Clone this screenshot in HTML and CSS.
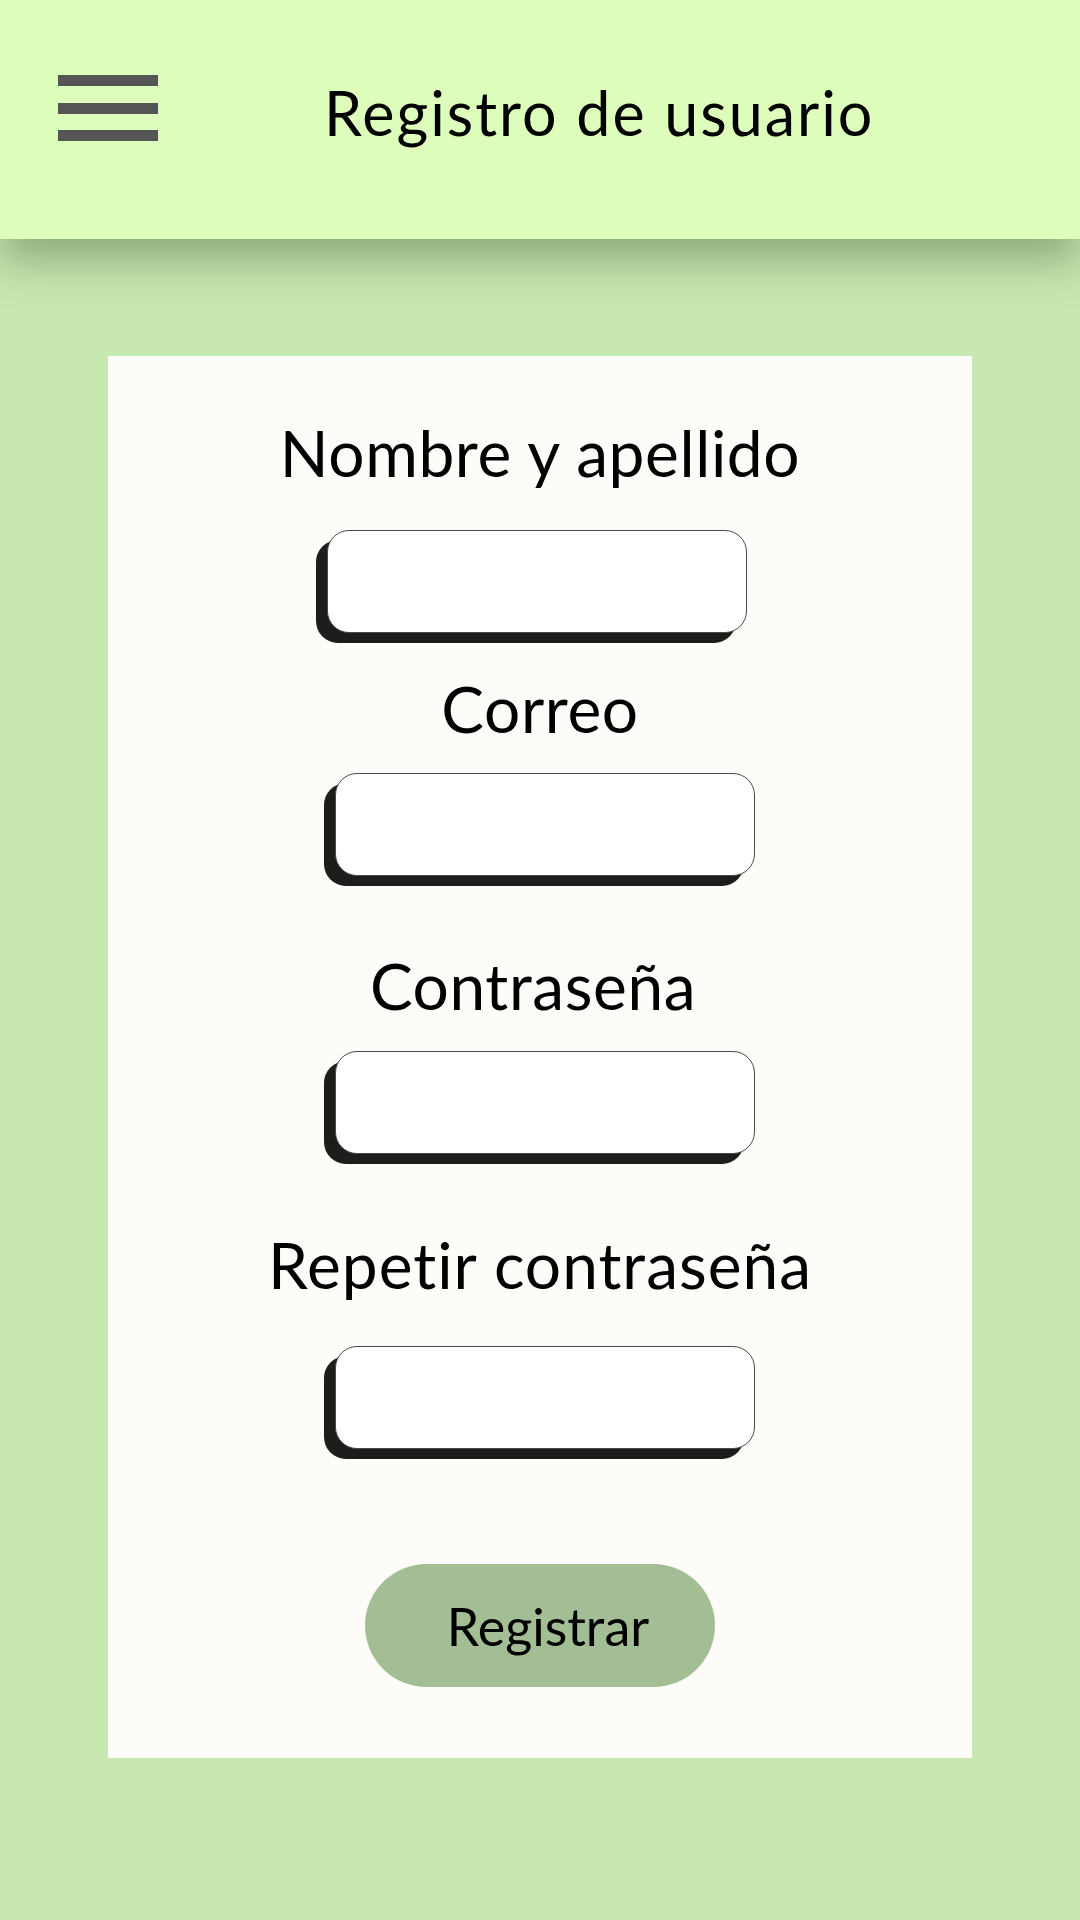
FILE: index.html
```html
<!DOCTYPE html>
<html lang="es">
<head>
<meta charset="utf-8">
<title>Registro de usuario</title>
<link rel="stylesheet" href="styles.css">
</head>
<body>
<header class="topbar">
  <button class="menu" aria-label="Menú">
    <span class="bar"></span><span class="bar"></span><span class="bar"></span>
  </button>
  <h1 class="title">Registro de usuario</h1>
</header>
<main class="page">
  <form class="card">
    <label class="label l-name" for="name">Nombre y apellido</label>
    <input class="field f-name" id="name" type="text">
    <label class="label l-mail" for="mail">Correo</label>
    <input class="field f-mail" id="mail" type="email">
    <label class="label l-pass" for="pass">Contraseña</label>
    <input class="field f-pass" id="pass" type="password">
    <label class="label l-rep" for="rep">Repetir contraseña</label>
    <input class="field f-rep" id="rep" type="password">
    <button class="submit" type="button"><span>Registrar</span></button>
  </form>
</main>
</body>
</html>
```
FILE: styles.css
```css
* { box-sizing: border-box; }
html, body { margin: 0; padding: 0; }
body {
  width: 1080px;
  min-height: 1920px;
  background: #c7e8b0;
  font-family: Lato, "Noto Sans", sans-serif;
  color: #000;
}
.topbar {
  height: 239px;
  background: #ddffbb;
  display: flex;
  align-items: flex-start;
  position: relative;
  box-shadow: 0 22px 40px rgba(40, 60, 30, 0.35);
}
.menu {
  margin: 75px 0 0 58px;
  padding: 0;
  border: 0;
  background: none;
  width: 100px;
  height: 66px;
  display: flex;
  flex-direction: column;
  justify-content: space-between;
}
.bar {
  display: block;
  height: 11px;
  width: 100px;
  background: #555555;
}
.title {
  margin: 76px 0 0 166px;
  font-weight: 400;
  font-size: 61px;
  line-height: 1.2;
  letter-spacing: 2px;
}
.page {
  padding: 117px 108px 0 108px;
}
.card {
  background: #fdfcf8;
  height: 1402px;
  padding-top: 59px;
  display: flex;
  flex-direction: column;
  align-items: center;
}
.label {
  font-size: 64px;
  line-height: 1.2;
  display: block;
  letter-spacing: 0.6px;
}
.field {
  display: block;
  width: 420px;
  height: 103px;
  background: #fff;
  border: 1px solid #4a4a4a;
  border-radius: 22px;
  box-shadow: -11px 10px 0 0 #1f1c1c;
}
.l-name { margin-bottom: 38px; }
.f-name { margin-left: -3px; margin-right: 3px; }
.l-mail { margin-top: 38px; margin-bottom: 25px; }
.f-mail { margin-left: 5px; margin-right: -5px; }
.l-pass { margin-top: 72px; margin-bottom: 27px; margin-left: -7px; margin-right: 7px; }
.f-pass { margin-left: 5px; margin-right: -5px; }
.l-rep { margin-top: 73px; margin-bottom: 42px; letter-spacing: 1px; }
.f-rep { margin-left: 5px; margin-right: -5px; }
.submit {
  margin-top: 115px;
  width: 350px;
  height: 123px;
  border: 0;
  border-radius: 62px;
  background: #a3be94;
  font-family: inherit;
  font-size: 52px;
  color: #000;
  padding: 0 0 0 16px;
}
```
